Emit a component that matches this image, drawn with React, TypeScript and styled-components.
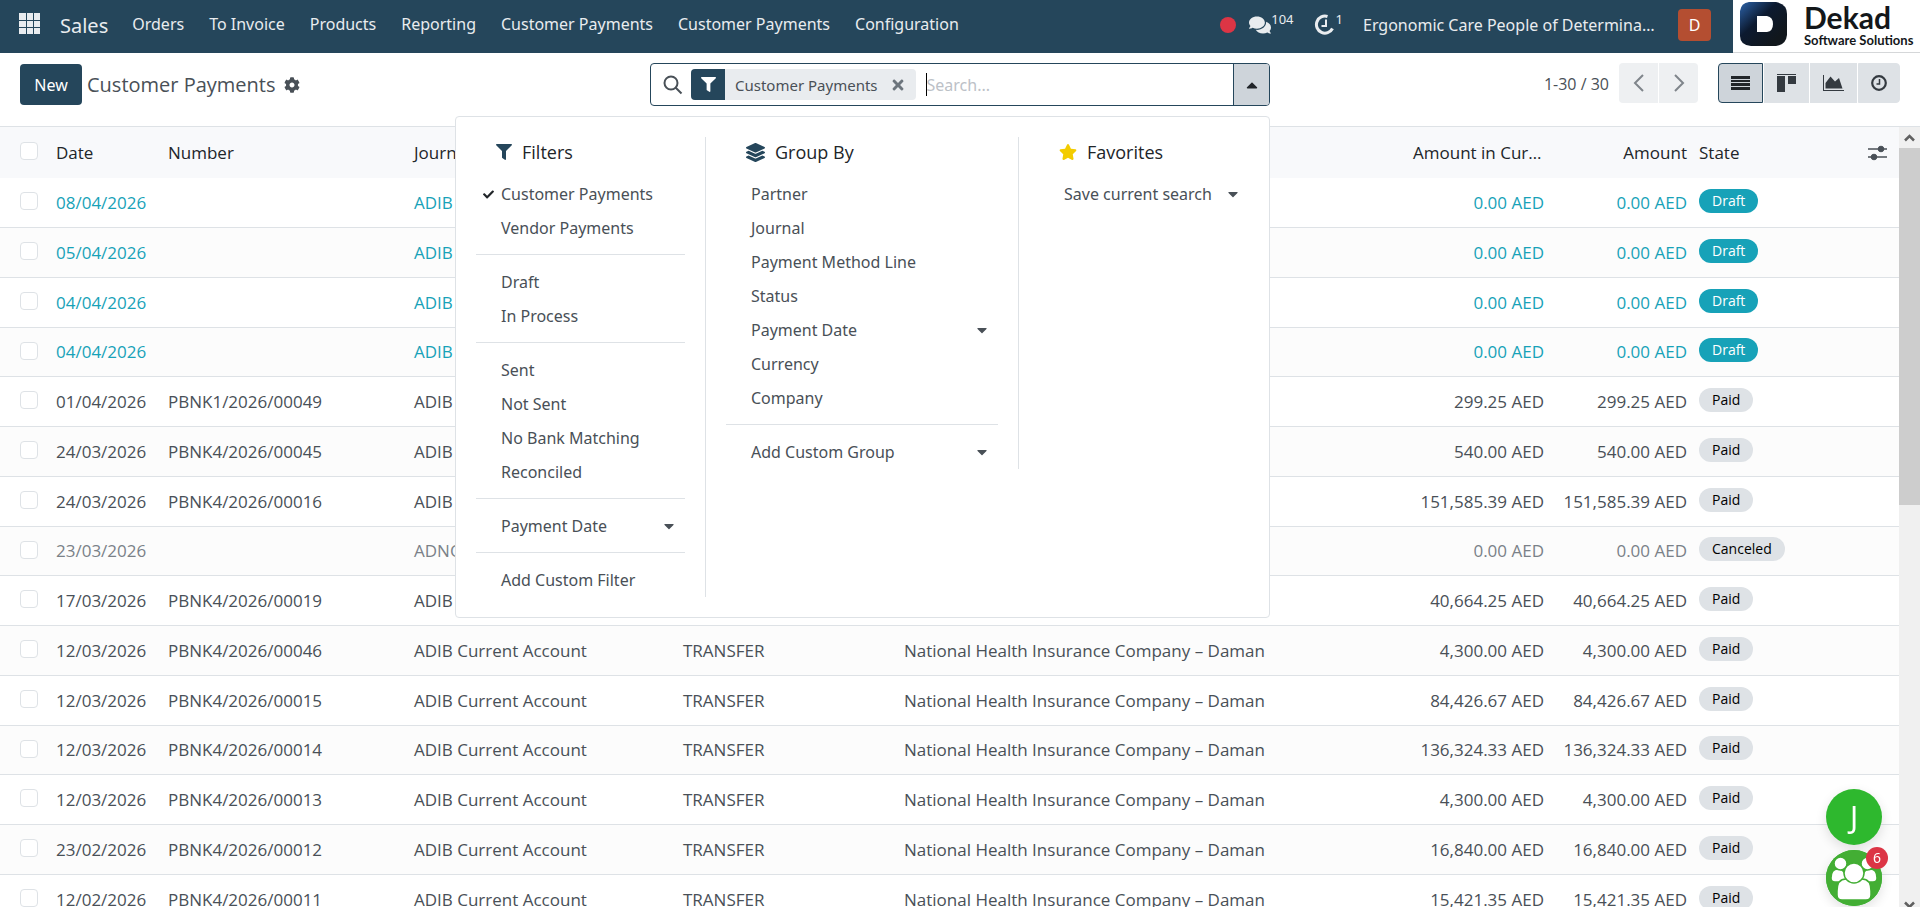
import React from "react";
import styled, { createGlobalStyle, css } from "styled-components";
import {
  FaFilter, FaLayerGroup, FaStar, FaCheck, FaCog, FaComments, FaTimes, FaCaretDown, FaCaretUp,
} from "react-icons/fa";

const color = {
  brand: "#25465b",
  text: "#495057",
  dark: "#212529",
  line: "#dee2e6",
  info: "#17a2b8",
  muted: "#7a8188",
};

const font = {
  ui: `"Segoe UI", "Noto Sans", sans-serif`,
  data: `"Segoe UI", "Open Sans", "Noto Sans", sans-serif`,
};

const GlobalStyle = createGlobalStyle`
  *, *::before, *::after { box-sizing: border-box; }
  html, body, #root { height: 100%; }
  body {
    margin: 0;
    overflow: hidden;
    background: #fff;
    color: ${color.text};
    font-family: ${font.ui};
    font-size: 16px;
    line-height: 24px;
  }
  button, input { font: inherit; color: inherit; margin: 0; }
  button { border: 0; padding: 0; background: none; cursor: pointer; }
  a { color: inherit; text-decoration: none; }
`;

const Shell = styled.div`
  display: flex;
  flex-direction: column;
  height: 100vh;
`;

/* ---------- top bar ---------- */

const Navbar = styled.header`
  flex: none;
  display: flex;
  align-items: stretch;
  height: 53px;
  background: ${color.brand};
  color: #e9ecef;
`;

const AppsButton = styled.button`
  display: flex;
  padding: 13px 19px 0 19px;
`;

const Brand = styled.a`
  padding-right: 12px;
  font-size: 20px;
  line-height: 51px;
`;

const NavLinks = styled.nav`
  flex: 1;
  display: flex;
  gap: 1px;
`;

const NavLink = styled.a`
  padding: 0 12px;
  line-height: 49px;
  white-space: nowrap;
`;

const Systray = styled.div`
  display: flex;
  align-items: center;
  height: 49px;
`;

const StatusDot = styled.span`
  width: 16px;
  height: 16px;
  margin-right: 13px;
  border-radius: 50%;
  background: #dc3545;
`;

const TrayButton = styled.button`
  display: flex;
  align-items: center;
  height: 49px;
  margin-right: 20px;
`;

const Count = styled.span`
  align-self: flex-start;
  padding-top: 9px;
  font-size: 13px;
  line-height: 20px;
`;

const Company = styled.button`
  width: 295px;
  margin-right: 20px;
  overflow: hidden;
  text-align: left;
  text-overflow: ellipsis;
  white-space: nowrap;
`;

const Avatar = styled.button`
  width: 33px;
  height: 32px;
  margin-right: 22px;
  border-radius: 4px;
  background: #b44e31;
  color: #fff;
  text-align: center;
`;

const Vendor = styled.a`
  display: flex;
  width: 187px;
  padding: 2px 0 0 7px;
  gap: 16px;
  border-bottom: 1px solid #d5d7d9;
  background: #fff;
  color: #14171a;
`;

const VendorName = styled.span`
  display: flex;
  flex-direction: column;
  font-family: Lato, sans-serif;
`;

const VendorTitle = styled.span`
  font-size: 30px;
  font-weight: 700;
  line-height: 31px;
`;

const VendorTagline = styled.span`
  font-size: 13px;
  font-weight: 700;
  line-height: 14px;
  white-space: nowrap;
`;

/* ---------- control panel ---------- */

const ControlPanel = styled.div`
  flex: none;
  display: grid;
  grid-template-columns: 1fr 620px 1fr;
  align-items: start;
  height: 73px;
  padding: 10px 20px 0;
`;

const Breadcrumb = styled.div`
  display: flex;
  align-items: center;
  height: 43px;
`;

const NewButton = styled.button`
  width: 62px;
  height: 41px;
  margin: 0 5px 0 0;
  border-radius: 4px;
  background: ${color.brand};
  color: #fff;
`;

const Title = styled.h1`
  margin: 0 8px 0 0;
  font-family: ${font.data};
  font-size: 20px;
  font-weight: 400;
  line-height: 28px;
`;

const IconButton = styled.button`
  display: flex;
  align-items: center;
  justify-content: center;
`;

const SearchArea = styled.div`
  position: relative;
`;

const SearchBox = styled.div`
  display: flex;
  align-items: center;
  height: 43px;
  padding-left: 12px;
  border: 1px solid ${color.brand};
  border-radius: 4px;
`;

const Facet = styled.div`
  display: flex;
  align-items: center;
  height: 31px;
  margin: 0 10px 0 8px;
  border-radius: 4px;
  overflow: hidden;
  background: #e9ecef;
  font-size: 15px;
`;

const FacetIcon = styled.span`
  display: flex;
  align-items: center;
  justify-content: center;
  width: 34px;
  height: 31px;
  margin-right: 10px;
  background: ${color.brand};
  color: #fff;
`;

const FacetRemove = styled(IconButton)`
  margin: 0 10px 0 12px;
  color: #6c757d;
`;

const SearchInput = styled.input`
  flex: 1;
  min-width: 0;
  height: 23px;
  padding: 0;
  border: 0;
  border-left: 1px solid #000;
  outline: 0;
  &::placeholder { color: #bcc1c7; opacity: 1; }
`;

const SearchToggle = styled(IconButton)`
  width: 36px;
  height: 41px;
  border-left: 1px solid ${color.brand};
  border-radius: 0 3px 3px 0;
  background: #ced4da;
  color: ${color.dark};
`;

const PanelRight = styled.div`
  display: flex;
  justify-content: flex-end;
`;

const PagerText = styled.span`
  margin-right: 10px;
  font-family: ${font.data};
  line-height: 42px;
`;

const ButtonGroup = styled.div`
  display: flex;
  gap: 1px;
  margin-left: 20px;
  &:first-of-type { margin-left: 0; }
  & > :first-child { border-radius: 4px 0 0 4px; }
  & > :last-child { border-radius: 0 4px 4px 0; }
`;

const PagerButton = styled(IconButton)`
  width: 39px;
  height: 40px;
  background: #eef0f2;
  color: #7f858b;
`;

const ViewButton = styled(IconButton)<{ $active?: boolean }>`
  height: 40px;
  padding: 0 12px;
  border: 1px solid ${color.line};
  background: ${color.line};
  color: #343a40;
  ${(p) => p.$active && css`
    border-color: ${color.brand};
    background: #ced4da;
    color: ${color.dark};
  `}
`;

/* ---------- search menu ---------- */

const SearchMenu = styled.div`
  position: absolute;
  top: 53px;
  right: 0;
  z-index: 2;
  display: flex;
  align-items: flex-start;
  width: 815px;
  padding: 20px 0;
  border: 1px solid ${color.line};
  border-radius: 4px;
  background: #fff;
`;

const MenuColumn = styled.section<{ $width: number }>`
  width: ${(p) => p.$width}px;
  padding: 0 20px;
  border-right: 1px solid ${color.line};
  &:last-child { border-right: 0; }
`;

const MenuHeading = styled.h2<{ $icon: string }>`
  display: flex;
  align-items: center;
  gap: 10px;
  height: 30px;
  margin: 0 0 10px;
  padding-left: 20px;
  color: ${color.dark};
  font-family: ${font.data};
  font-size: 18px;
  font-weight: 400;
  & > svg { color: ${(p) => p.$icon}; }
`;

const MenuItem = styled.button`
  display: flex;
  align-items: center;
  width: 100%;
  height: 34px;
  padding: 0 8px 0 7px;
  white-space: nowrap;
`;

const Tick = styled.span`
  display: flex;
  flex: none;
  width: 18px;
  color: ${color.dark};
`;

const MenuCaret = styled.span`
  display: flex;
  margin-left: auto;
`;

const MenuDivider = styled.hr`
  height: 1px;
  margin: 9px 0 10px;
  border: 0;
  background: ${color.line};
`;

/* ---------- list ---------- */

const ListArea = styled.main`
  flex: 1;
  display: flex;
  min-height: 0;
  border-top: 1px solid ${color.line};
`;

const ListClip = styled.div`
  flex: 1;
  min-width: 0;
  overflow: hidden;
`;

const Table = styled.table`
  width: 100%;
  table-layout: fixed;
  border-collapse: separate;
  border-spacing: 0;
  font-family: ${font.data};
  font-size: 17px;
`;

const Th = styled.th<{ $right?: boolean }>`
  height: 51px;
  padding: 0 6px;
  overflow: hidden;
  background: #f8f9fb;
  color: ${color.dark};
  font-weight: 400;
  text-align: ${(p) => (p.$right ? "right" : "left")};
  text-overflow: ellipsis;
  white-space: nowrap;
`;

const Td = styled.td<{ $right?: boolean }>`
  height: 50px;
  padding: 0 6px;
  border-bottom: 1px solid ${color.line};
  overflow: hidden;
  text-align: ${(p) => (p.$right ? "right" : "left")};
  white-space: nowrap;
`;

type Tone = "info" | "muted" | "normal";

const Row = styled.tr<{ $tone: Tone }>`
  color: ${(p) => (p.$tone === "info" ? color.info : p.$tone === "muted" ? color.muted : color.text)};
  &:nth-child(even) { background: #fcfcfc; }
  &:nth-child(4n) > ${Td} { height: 49px; }
`;

const Check = styled.input`
  appearance: none;
  display: block;
  width: 18px;
  height: 18px;
  margin: 0 0 3px 14px;
  border: 1px solid ${color.line};
  border-radius: 4px;
  background: #fff;
`;

const Badge = styled.span<{ $info: boolean }>`
  display: block;
  width: fit-content;
  margin-bottom: 4px;
  padding: 0 13px;
  border-radius: 12px;
  background: ${(p) => (p.$info ? color.info : color.line)};
  color: ${(p) => (p.$info ? "#fff" : "#000")};
  font-size: 14px;
  line-height: 24px;
`;

const Scrollbar = styled.div`
  flex: none;
  display: flex;
  flex-direction: column;
  width: 21px;
  margin-bottom: -8px;
  background: #f0f0f0;
`;

const ScrollThumb = styled.div`
  height: 357px;
  margin-bottom: auto;
  background: #cdcdcd;
`;

const ScrollArrow = styled(IconButton)`
  height: 21px;
  color: #606060;
`;

/* ---------- chat bubbles ---------- */

const ChatHub = styled.div`
  position: fixed;
  right: 38px;
  bottom: 1px;
  z-index: 3;
  display: flex;
  flex-direction: column;
  gap: 5px;
`;

const Bubble = styled.button`
  position: relative;
  display: flex;
  align-items: center;
  justify-content: center;
  width: 56px;
  height: 56px;
  border-radius: 50%;
  background: #2eb82e;
  box-shadow: 0 4px 12px rgba(0, 0, 0, 0.12);
  color: #fff;
  font-size: 30px;
`;

const BubbleCount = styled.span`
  position: absolute;
  top: -3px;
  right: -6px;
  width: 22px;
  height: 22px;
  border-radius: 50%;
  background: #dc3545;
  font-size: 14px;
  line-height: 22px;
`;

/* ---------- drawings ---------- */

const AppsIcon = () => (
  <svg width="22" height="22" viewBox="0 0 22 22" fill="#e9ecef" aria-hidden="true">
    {[0, 8, 15].map((y) => [0, 8, 15].map((x) => <rect key={`${x}-${y}`} x={x} y={y} width={x === 0 ? 7 : 6} height={y === 0 ? 7 : 6} />))}
  </svg>
);

const ActivityIcon = () => (
  <svg width="22" height="22" viewBox="0 0 22 22" fill="none" stroke="#e9ecef" strokeWidth="3" aria-hidden="true">
    <path d="M13.500 2.500A8.500 8.500 0 1 0 18.500 14.500" />
    <path d="M12 5.500v6.500H7.500" strokeWidth="2" />
  </svg>
);

const VendorLogo = () => (
  <svg width="48" height="45" viewBox="0 0 48 45" aria-hidden="true">
    <defs>
      <linearGradient id="logoFill" x1="0" y1="0" x2="0.8" y2="0.8">
        <stop offset="0" stopColor="#2c62a8" />
        <stop offset="0.5" stopColor="#0c1a30" />
        <stop offset="1" stopColor="#11171c" />
      </linearGradient>
    </defs>
    <path d="M9 0H36Q47 2 47 12V33Q46 43 36 44H11Q0 43 0 34V9Q1 1 9 0Z" fill="url(#logoFill)" />
    <path d="M17 14H27Q33 15 33 22Q33 29 27 30H17Z" fill="#fff" />
  </svg>
);

const SearchIcon = () => (
  <svg width="20" height="20" viewBox="0 0 20 20" fill="none" stroke={color.text} strokeWidth="2" aria-hidden="true">
    <circle cx="8" cy="8" r="6.500" />
    <path d="M12.500 12.500L18.500 18.500" />
  </svg>
);

const Chevron = ({ left }: { left?: boolean }) => (
  <svg width="12" height="20" viewBox="0 0 12 20" fill="none" stroke="currentColor" strokeWidth="2" aria-hidden="true">
    <path d={left ? "M10 2L2 10L10 18" : "M2 2L10 10L2 18"} />
  </svg>
);

const ListIcon = () => (
  <svg width="19" height="14" viewBox="0 0 19 14" fill="currentColor" aria-hidden="true">
    <path d="M0 0h19v3H0zM0 4h19v2H0zM0 7h19v3H0zM0 11h19v3H0z" />
  </svg>
);

const KanbanIcon = () => (
  <svg width="19" height="18" viewBox="0 0 19 18" fill="currentColor" aria-hidden="true">
    <path d="M0 0h19v1H0zM0 2h8v16H0zM11 2h8v8h-8z" />
  </svg>
);

const GraphIcon = () => (
  <svg width="21" height="16" viewBox="0 0 21 16" fill="currentColor" aria-hidden="true">
    <path d="M0 0h1v15H21V16H0zM2.500 13.500V8l5-6.500 4.500 5 4-3.500L19.500 13.500z" />
  </svg>
);

const ClockIcon = () => (
  <svg width="16" height="16" viewBox="0 0 16 16" fill="none" stroke="currentColor" aria-hidden="true">
    <circle cx="8" cy="8" r="6.800" strokeWidth="2.200" />
    <path d="M8.500 4v5H5.500" strokeWidth="1.500" />
  </svg>
);

const OptionsIcon = () => (
  <svg width="19" height="16" viewBox="0 0 19 16" fill={color.text} stroke={color.text} aria-hidden="true">
    <path d="M0 4h19M0 12h19" strokeWidth="1.500" />
    <circle cx="13" cy="4" r="2.800" />
    <circle cx="6" cy="12" r="2.800" />
  </svg>
);

const ArrowIcon = ({ down }: { down?: boolean }) => (
  <svg width="11" height="8" viewBox="0 0 11 8" fill="none" stroke="currentColor" strokeWidth="2.500" aria-hidden="true">
    <path d={down ? "M1 1.500L5.500 6L10 1.500" : "M1 6.500L5.500 2L10 6.500"} />
  </svg>
);

const GroupIcon = () => (
  <svg width="56" height="56" viewBox="0 0 56 56" fill="#fff" stroke="#43ae34" strokeWidth="1.500" aria-hidden="true">
    <circle cx="28" cy="28" r="28" fill="#43ae34" stroke="none" />
    <path d="M5 28Q5 19 12 19Q20 19 20 32H9Q5 32 5 28Z" />
    <path d="M51 28Q51 19 44 19Q36 19 36 32H47Q51 32 51 28Z" />
    <circle cx="14.500" cy="13.500" r="6.500" />
    <circle cx="41.500" cy="13.500" r="6.500" />
    <path d="M11 45V41Q11 29 20 29H36Q45 29 45 41V45Q45 50 40 50H16Q11 50 11 45Z" />
    <circle cx="28" cy="23" r="10" />
  </svg>
);

/* ---------- data ---------- */

const links = ["Orders", "To Invoice", "Products", "Reporting", "Customer Payments", "Customer Payments", "Configuration"];

type Entry = { label: string; active?: boolean; expands?: boolean };

const filterGroups: Entry[][] = [
  [{ label: "Customer Payments", active: true }, { label: "Vendor Payments" }],
  [{ label: "Draft" }, { label: "In Process" }],
  [{ label: "Sent" }, { label: "Not Sent" }, { label: "No Bank Matching" }, { label: "Reconciled" }],
  [{ label: "Payment Date", expands: true }],
  [{ label: "Add Custom Filter" }],
];

const groupByGroups: Entry[][] = [
  [
    { label: "Partner" }, { label: "Journal" }, { label: "Payment Method Line" }, { label: "Status" },
    { label: "Payment Date", expands: true }, { label: "Currency" }, { label: "Company" },
  ],
  [{ label: "Add Custom Group", expands: true }],
];

const favoriteGroups: Entry[][] = [[{ label: "Save current search", expands: true }]];

type Payment = { date: string; number?: string; journal: string; method?: string; partner?: string; amount: string; state: string };

const adib = "ADIB Current Account";
const daman = "National Health Insurance Company – Daman";
const transfer = "TRANSFER";

const payments: Payment[] = [
  { date: "08/04/2026", journal: adib, amount: "0.00", state: "Draft" },
  { date: "05/04/2026", journal: adib, amount: "0.00", state: "Draft" },
  { date: "04/04/2026", journal: adib, amount: "0.00", state: "Draft" },
  { date: "04/04/2026", journal: adib, amount: "0.00", state: "Draft" },
  { date: "01/04/2026", number: "PBNK1/2026/00049", journal: adib, amount: "299.25", state: "Paid" },
  { date: "24/03/2026", number: "PBNK4/2026/00045", journal: adib, amount: "540.00", state: "Paid" },
  { date: "24/03/2026", number: "PBNK4/2026/00016", journal: adib, amount: "151,585.39", state: "Paid" },
  { date: "23/03/2026", journal: "ADNOC", amount: "0.00", state: "Canceled" },
  { date: "17/03/2026", number: "PBNK4/2026/00019", journal: adib, amount: "40,664.25", state: "Paid" },
  { date: "12/03/2026", number: "PBNK4/2026/00046", journal: adib, method: transfer, partner: daman, amount: "4,300.00", state: "Paid" },
  { date: "12/03/2026", number: "PBNK4/2026/00015", journal: adib, method: transfer, partner: daman, amount: "84,426.67", state: "Paid" },
  { date: "12/03/2026", number: "PBNK4/2026/00014", journal: adib, method: transfer, partner: daman, amount: "136,324.33", state: "Paid" },
  { date: "12/03/2026", number: "PBNK4/2026/00013", journal: adib, method: transfer, partner: daman, amount: "4,300.00", state: "Paid" },
  { date: "23/02/2026", number: "PBNK4/2026/00012", journal: adib, method: transfer, partner: daman, amount: "16,840.00", state: "Paid" },
  { date: "12/02/2026", number: "PBNK4/2026/00011", journal: adib, method: transfer, partner: daman, amount: "15,421.35", state: "Paid" },
];

const toneOf = (state: string): Tone => (state === "Draft" ? "info" : state === "Canceled" ? "muted" : "normal");

/* ---------- sections ---------- */

const MenuGroups = ({ groups }: { groups: Entry[][] }) => (
  <>
    {groups.map((group, i) => (
      <React.Fragment key={i}>
        {i > 0 && <MenuDivider />}
        {group.map((entry) => (
          <MenuItem key={entry.label} type="button">
            <Tick>{entry.active && <FaCheck size={11} />}</Tick>
            {entry.label}
            {entry.expands && <MenuCaret><FaCaretDown size={16} /></MenuCaret>}
          </MenuItem>
        ))}
      </React.Fragment>
    ))}
  </>
);

const TopBar = () => (
  <Navbar>
    <AppsButton type="button" aria-label="Apps"><AppsIcon /></AppsButton>
    <Brand href="#sales">Sales</Brand>
    <NavLinks>
      {links.map((label, i) => <NavLink key={i} href="#menu">{label}</NavLink>)}
    </NavLinks>
    <Systray>
      <StatusDot />
      <TrayButton type="button" aria-label="Messages"><FaComments size={22} /><Count>104</Count></TrayButton>
      <TrayButton type="button" aria-label="Activities"><ActivityIcon /><Count>1</Count></TrayButton>
      <Company type="button">Ergonomic Care People of Determination</Company>
      <Avatar type="button">D</Avatar>
    </Systray>
    <Vendor href="#vendor">
      <VendorLogo />
      <VendorName>
        <VendorTitle>Dekad</VendorTitle>
        <VendorTagline>Software Solutions</VendorTagline>
      </VendorName>
    </Vendor>
  </Navbar>
);

const SearchDropdown = () => (
  <SearchMenu>
    <MenuColumn $width={250}>
      <MenuHeading $icon={color.brand}><FaFilter size={16} />Filters</MenuHeading>
      <MenuGroups groups={filterGroups} />
    </MenuColumn>
    <MenuColumn $width={313}>
      <MenuHeading $icon={color.brand}><FaLayerGroup size={19} />Group By</MenuHeading>
      <MenuGroups groups={groupByGroups} />
    </MenuColumn>
    <MenuColumn $width={250}>
      <MenuHeading $icon="#f3cc00"><FaStar size={18} />Favorites</MenuHeading>
      <MenuGroups groups={favoriteGroups} />
    </MenuColumn>
  </SearchMenu>
);

export default function App() {
  return (
    <Shell>
      <GlobalStyle />
      <TopBar />
      <ControlPanel>
        <Breadcrumb>
          <NewButton type="button">New</NewButton>
          <Title>Customer Payments</Title>
          <IconButton type="button" aria-label="Actions"><FaCog size={16} /></IconButton>
        </Breadcrumb>
        <SearchArea>
          <SearchBox>
            <SearchIcon />
            <Facet>
              <FacetIcon><FaFilter size={15} /></FacetIcon>
              Customer Payments
              <FacetRemove type="button" aria-label="Remove"><FaTimes size={16} /></FacetRemove>
            </Facet>
            <SearchInput type="text" placeholder="Search..." aria-label="Search" />
            <SearchToggle type="button" aria-label="Toggle search menu"><FaCaretUp size={18} /></SearchToggle>
          </SearchBox>
          <SearchDropdown />
        </SearchArea>
        <PanelRight>
          <PagerText>1-30 / 30</PagerText>
          <ButtonGroup>
            <PagerButton type="button" aria-label="Previous"><Chevron left /></PagerButton>
            <PagerButton type="button" aria-label="Next"><Chevron /></PagerButton>
          </ButtonGroup>
          <ButtonGroup>
            <ViewButton type="button" aria-label="List" $active><ListIcon /></ViewButton>
            <ViewButton type="button" aria-label="Kanban"><KanbanIcon /></ViewButton>
            <ViewButton type="button" aria-label="Graph"><GraphIcon /></ViewButton>
            <ViewButton type="button" aria-label="Activity"><ClockIcon /></ViewButton>
          </ButtonGroup>
        </PanelRight>
      </ControlPanel>
      <ListArea>
        <ListClip>
          <Table>
            <colgroup>
              <col width="50" /><col width="112" /><col width="246" /><col width="269" /><col width="221" />
              <col /><col width="143" /><col width="143" /><col width="169" /><col width="37" />
            </colgroup>
            <thead>
              <tr>
                <Th><Check type="checkbox" aria-label="Select all" /></Th>
                <Th>Date</Th>
                <Th>Number</Th>
                <Th>Journal</Th>
                <Th />
                <Th />
                <Th $right>Amount in Currency</Th>
                <Th $right>Amount</Th>
                <Th>State</Th>
                <Th><IconButton type="button" aria-label="Columns"><OptionsIcon /></IconButton></Th>
              </tr>
            </thead>
            <tbody>
              {payments.map((p, i) => (
                <Row key={i} $tone={toneOf(p.state)}>
                  <Td><Check type="checkbox" aria-label={`Select ${p.date}`} /></Td>
                  <Td>{p.date}</Td>
                  <Td>{p.number}</Td>
                  <Td>{p.journal}</Td>
                  <Td>{p.method}</Td>
                  <Td>{p.partner}</Td>
                  <Td $right>{p.amount} AED</Td>
                  <Td $right>{p.amount} AED</Td>
                  <Td><Badge $info={p.state === "Draft"}>{p.state}</Badge></Td>
                  <Td />
                </Row>
              ))}
            </tbody>
          </Table>
        </ListClip>
        <Scrollbar>
          <ScrollArrow type="button" aria-label="Scroll up"><ArrowIcon /></ScrollArrow>
          <ScrollThumb />
          <ScrollArrow type="button" aria-label="Scroll down"><ArrowIcon down /></ScrollArrow>
        </Scrollbar>
      </ListArea>
      <ChatHub>
        <Bubble type="button">J</Bubble>
        <Bubble type="button" aria-label="Group chat"><GroupIcon /><BubbleCount>6</BubbleCount></Bubble>
      </ChatHub>
    </Shell>
  );
}
